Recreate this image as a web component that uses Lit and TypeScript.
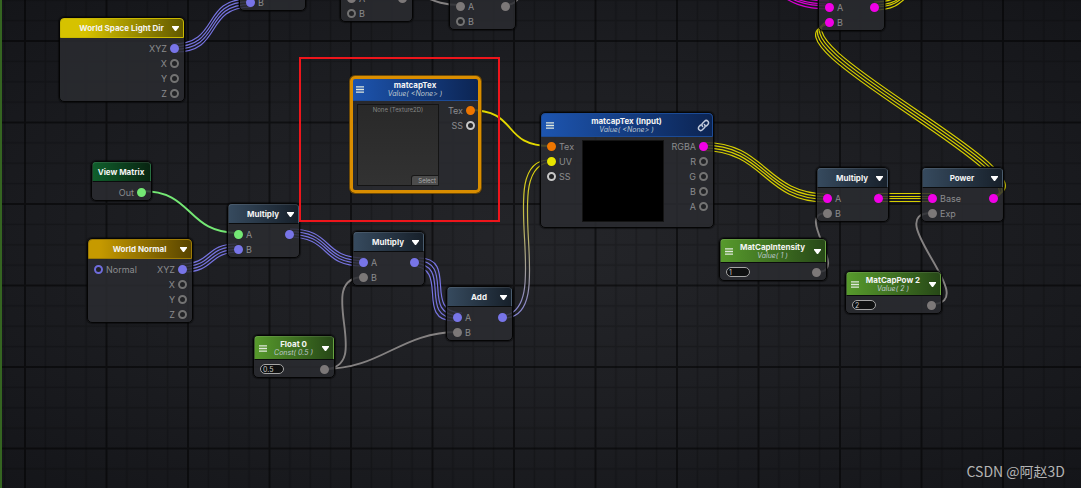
import { LitElement, html, css, svg, nothing } from "lit";
import { customElement, property } from "lit/decorators.js";

interface Port { label?: string; color?: string; filled?: boolean; }
interface GraphNode {
  x: number; y: number; width: number; title: string; tone: string;
  sub?: string; menu?: boolean; arrow?: boolean; link?: boolean; selected?: boolean;
  value?: string; preview?: "empty" | "black"; ins?: Port[]; outs?: Port[];
}
interface Wire { d: string; color: string; strands: number[][]; }

const VIOLET = "#7875e8", GREY = "#7c7878", PINK = "#f000e6", YELLOW = "#e8e400", ORANGE = "#ee7600", GREEN = "#74e874";
const on = (color: string, label = ""): Port => ({ label, color, filled: true });
const off = (label: string, color = "#737373"): Port => ({ label, color, filled: false });
const xyz = [on(VIOLET, "XYZ"), off("X"), off("Y"), off("Z")];

const NODES: GraphNode[] = [
  { x: 239, y: -44, width: 67, title: "", tone: "math", ins: [off(""), on(VIOLET, "B")], outs: [] },
  { x: 340, y: -33, width: 73, title: "", tone: "math", ins: [on(GREY, "A"), off("B")], outs: [on(GREY)] },
  { x: 449, y: -25, width: 67, title: "", tone: "math", ins: [on(GREY, "A"), off("B")], outs: [on(GREY)] },
  { x: 818, y: -24, width: 67, title: "", tone: "math", ins: [on(PINK, "A"), on(PINK, "B")], outs: [on(PINK)] },
  { x: 59, y: 17, width: 126, title: "World Space Light Dir", tone: "light", arrow: true, outs: xyz },
  { x: 91, y: 161, width: 61, title: "View Matrix", tone: "matrix", outs: [on(GREEN, "Out")] },
  { x: 87, y: 238, width: 106, title: "World Normal", tone: "normal", arrow: true, ins: [off("Normal", "#6f6cdb")], outs: xyz },
  { x: 227, y: 203, width: 73, title: "Multiply", tone: "math", arrow: true, ins: [on(GREEN, "A"), on(VIOLET, "B")], outs: [on(VIOLET)] },
  { x: 352, y: 231, width: 73, title: "Multiply", tone: "math", arrow: true, ins: [on(VIOLET, "A"), on(GREY, "B")], outs: [on(VIOLET)] },
  { x: 446, y: 286, width: 67, title: "Add", tone: "math", arrow: true, ins: [on(VIOLET, "A"), on(GREY, "B")], outs: [on(VIOLET)] },
  { x: 253, y: 335, width: 82, title: "Float 0", sub: "Const( 0.5 )", tone: "value", menu: true, arrow: true, value: "0.5", outs: [on(GREY)] },
  { x: 350, y: 76, width: 131, title: "matcapTex", sub: "Value( <None> )", tone: "texture", menu: true, selected: true, preview: "empty", outs: [on(ORANGE, "Tex"), off("SS", "#c8c8c8")] },
  { x: 540, y: 112, width: 174, title: "matcapTex (Input)", sub: "Value( <None> )", tone: "texture", menu: true, link: true, preview: "black",
    ins: [on(ORANGE, "Tex"), on(YELLOW, "UV"), off("SS", "#c8c8c8")], outs: [on(PINK, "RGBA"), off("R"), off("G"), off("B"), off("A")] },
  { x: 816, y: 167, width: 73, title: "Multiply", tone: "math", arrow: true, ins: [on(PINK, "A"), on(GREY, "B")], outs: [on(PINK)] },
  { x: 921, y: 167, width: 83, title: "Power", tone: "math", arrow: true, ins: [on(PINK, "Base"), on(GREY, "Exp")], outs: [on(PINK)] },
  { x: 719, y: 238, width: 108, title: "MatCapIntensity", sub: "Value( 1 )", tone: "value", menu: true, arrow: true, value: "1", outs: [on(GREY)] },
  { x: 845, y: 271, width: 97, title: "MatCapPow 2", sub: "Value( 2 )", tone: "value", menu: true, arrow: true, value: "2", outs: [on(GREY)] },
];

// Each strand is the base curve shifted by [dx, dy].
const one = [[0, 0]];
const two = [[-2, -1], [2, 1]];
const rising = [[-1.5, -4], [-0.5, -1.3], [0.5, 1.3], [1.5, 4]];
const falling = [[1, -4], [0.3, -1.3], [-0.3, 1.3], [-1, 4]];
const steep = [[4, -4], [1.3, -1.3], [-1.3, 1.3], [-4, 4]];
const flat = [[0, -4], [0, -1], [0, 1], [0, 4]];
const diagonal = [[3, -3], [1, -1], [-1, 1], [-3, 3]];

const WIRES: Wire[] = [
  { d: "M174 48 C222 48 202 3 250 3", color: "#7673e0", strands: rising },
  { d: "M142 191 C194 191 186 233 238 233", color: "#74e874", strands: one },
  { d: "M182 268 C214 268 206 248 238 248", color: "#7673e0", strands: rising },
  { d: "M289 233 C333 233 320 262 364 262", color: "#7673e0", strands: falling },
  { d: "M415 262 C455 262 418 317 458 317", color: "#7673e0", strands: steep },
  { d: "M324 369 C376 369 312 277 364 277", color: "#858282", strands: one },
  { d: "M324 369 C382 369 400 332 458 332", color: "#858282", strands: one },
  { d: "M469 110 C520 110 500 146 551 146", color: "#e2d800", strands: one },
  { d: "M502 317 C560 317 493 161 551 161", color: "url(#uv)", strands: two },
  { d: "M703 146.5 C766 146.5 764 198 827 198", color: "#d6ce00", strands: falling },
  { d: "M878 197.5 L932 197.5", color: "#d6ce00", strands: flat },
  { d: "M817 272 C851 272 793 213 827 213", color: "#858282", strands: one },
  { d: "M931 304 C985 304 878 213 932 213", color: "#858282", strands: one },
  { d: "M993 198 C1058 178 760 42 829 22", color: "#d6ce00", strands: diagonal },
  { d: "M874 6 C896 6 900 -1 912 -12", color: "#d6ce00", strands: flat },
  { d: "M829 5 C798 5 788 -4 772 -14", color: "#d800d2", strands: flat },
  { d: "M402 -8 C425 -8 430 5 460 5", color: "#858282", strands: one },
  { d: "M505 5 C515 5 517 0 522 -6", color: "#858282", strands: one },
];

@customElement("graph-node")
export class GraphNodeElement extends LitElement {
  @property({ attribute: false }) node!: GraphNode;

  static styles = css`
    :host { display: block; }
    .node {
      position: relative; box-sizing: border-box; border: 1px solid #050505; border-radius: 5px;
      box-shadow: 0 0 1px 1px rgba(0, 0, 0, 0.45);
      background: rgba(43, 44, 49, 0.84);
    }
    .selected::after {
      content: ""; position: absolute; inset: -1px; border: 3px solid #d98d00; border-radius: 5px;
      box-shadow: 0 0 0 1px #6d4a08; pointer-events: none;
    }
    .head {
      box-sizing: border-box; height: 20px; display: grid; align-items: center;
      grid-template-columns: 16px 1fr 16px; border-radius: 4px 4px 0 0;
      border: 1px solid rgba(255, 255, 255, 0.1); border-bottom-color: #0b0c0d;
    }
    .plain { grid-template-columns: 0 1fr 0; }
    .tall { height: 24px; }
    .math { background: linear-gradient(90deg, #364a5e, #17202a); }
    .light { background: linear-gradient(90deg, #d6c200 20%, #625900); border-color: #c9b800; }
    .normal { background: linear-gradient(90deg, #c69a00 10%, #584400); border-color: #9d7b05; }
    .matrix { background: linear-gradient(90deg, #105f2c, #082411); }
    .value { background: linear-gradient(90deg, #579a2c, #274817); }
    .texture { background: linear-gradient(90deg, #1d55b0, #0c2452); border-color: #1c4b96; }
    .names { text-align: center; white-space: nowrap; display: flex; flex-direction: column; align-items: center; min-width: 0; padding-right: 1px; }
    h2 { margin: 0; font-size: 8px; line-height: 9px; font-weight: 700; color: #f4f4f4; }
    .sub { font-size: 7px; line-height: 8px; font-style: italic; color: #bfc8cf; }
    button { font: inherit; border: 0; padding: 0; margin: 0; background: none; color: inherit; }
    .icon { display: grid; place-items: center; height: 16px; }
    .arrow { grid-column: 3; }
    .link { justify-self: end; margin-right: 2px; }
    svg { display: block; }
    .body { display: flex; justify-content: space-between; padding: 3px 5px 0 6px; }
    .short { padding-top: 2px; }
    .ports { display: flex; flex-direction: column; margin: 0; padding: 0; list-style: none; }
    .row { display: flex; align-items: center; gap: 3px; height: 15px; font-size: 9px; line-height: 15px; color: #8b8c8e; }
    .outs .row { flex-direction: row-reverse; }
    .dot { box-sizing: border-box; width: 9px; height: 9px; border-radius: 50%; border: 2px solid currentColor; background: #222326; }
    .filled { background: currentColor; }
    .field {
      box-sizing: border-box; width: 24px; height: 10px; margin: 2px 0 0; padding: 0 2px;
      border: 1px solid #a5a5a5; border-radius: 5px; background: #0f1011; color: #c8c8c8;
      font: 7px/8px Inter, sans-serif; outline: 0;
    }
    .preview { box-sizing: border-box; width: 82px; height: 82px; margin: 1px 0 5px; border: 1px solid #141414; background: #000; }
    .empty {
      background: linear-gradient(#292929, #323232); display: flex; flex-direction: column; justify-content: space-between;
      text-align: center; font-size: 6px; line-height: 9px; color: #858585; margin-bottom: 6px;
    }
    .select { align-self: flex-end; width: 26px; height: 9px; line-height: 9px; text-align: right; padding-right: 2px; background: #4c4c4c; color: #aaa; border-radius: 2px 0 0 0; box-shadow: 0 0 0 1px #181818; }
  `;

  private ports(list: Port[] | undefined, cls: string) {
    return html`<ul class="ports ${cls}">${(list ?? []).map(p => html`
      <li class="row"><span class="dot ${p.filled ? "filled" : ""}" style="color:${p.color}"></span>${p.label}</li>`)}</ul>`;
  }

  render() {
    const n = this.node;
    return html`<section class="node ${n.selected ? "selected" : ""}">
      <header class="head ${n.tone} ${n.sub ? "tall" : ""} ${n.arrow || n.menu ? "" : "plain"}">
        ${n.menu ? html`<button class="icon" aria-label="Menu"><svg width="8" height="7" viewBox="0 0 8 7"><path d="M0 .8h8M0 3.5h8M0 6.2h8" stroke="#dfe8dc" stroke-width="1.3" /></svg></button>` : html`<span></span>`}
        <div class="names">${n.title ? html`<h2>${n.title}</h2>` : nothing}${n.sub ? html`<span class="sub">${n.sub}</span>` : nothing}</div>
        ${n.arrow ? html`<button class="icon arrow" aria-label="Collapse"><svg width="7" height="5" viewBox="0 0 7 5"><path d="M0 0h7v1L4 5H3L0 1z" fill="#fff" /></svg></button>` : nothing}
        ${n.link ? html`<button class="icon link" aria-label="Linked"><svg width="13" height="13" viewBox="0 0 13 13" fill="none" stroke="#c3cbdc" stroke-width="1.5" stroke-linecap="round"><path d="M5.6 7.4a2.3 2.3 0 0 1 0-3.2l2-2a2.3 2.3 0 0 1 3.3 3.3L9.5 6.9M7.4 5.6a2.3 2.3 0 0 1 0 3.2l-2 2a2.3 2.3 0 0 1-3.3-3.3l1.4-1.4" /></svg></button>` : nothing}
      </header>
      <div class="body ${n.sub ? "short" : ""}">
        ${n.value ? html`<input class="field" aria-label="${n.title}" .value=${n.value} />` : n.preview === "empty" ? nothing : this.ports(n.ins, "ins")}
        ${n.preview === "black" ? html`<div class="preview"></div>` : nothing}
        ${n.preview === "empty" ? html`<div class="preview empty"><span>None (Texture2D)</span><button class="select">Select</button></div>` : nothing}
        ${this.ports(n.outs, "outs")}
      </div>
    </section>`;
  }
}

@customElement("app-root")
export class AppRoot extends LitElement {
  static styles = css`
    :host { display: block; font-family: Inter, Roboto, sans-serif; }
    .canvas {
      position: relative; height: 100vh; overflow: hidden; box-sizing: border-box;
      background: radial-gradient(ellipse at center, #242529, #1d1e22 50%, #141519 100%);
    }
    .wires { position: absolute; inset: 0; width: 100%; height: 100%; }
    .item { position: absolute; }
    .frame { position: absolute; box-sizing: border-box; border: 2px solid #ee151b; }
    .edge { position: absolute; inset: 0 auto 0 0; width: 2px; background: #356521; }
    .credit {
      position: absolute; right: 16px; bottom: 8px; margin: 0; color: #b4b4b4;
      font: 14px/18px "Noto Sans CJK SC", sans-serif;
    }
  `;

  render() {
    return html`<main class="canvas">
      <svg class="wires" fill="none" aria-hidden="true">
        <defs>
          <pattern id="grid" x="25" y="41" width="81.5" height="81.5" patternUnits="userSpaceOnUse">
            <path d="M20.4 0v81.5M40.8 0v81.5M61.1 0v81.5M0 20.4h81.5M0 40.8h81.5M0 61.1h81.5" stroke="#000" stroke-opacity=".2" stroke-width="1.5" />
            <path d="M0 0v81.5M81.5 0v81.5M0 0h81.5M0 81.5h81.5" stroke="#000" stroke-opacity=".5" stroke-width="2" />
          </pattern>
          <linearGradient id="uv" gradientUnits="userSpaceOnUse" x1="0" y1="317" x2="0" y2="161">
            <stop offset="0" stop-color="#8583d8" /><stop offset="1" stop-color="#e2d800" />
          </linearGradient>
        </defs>
        <rect width="100%" height="100%" fill="url(#grid)" />
        ${WIRES.map(w => w.strands.map(([dx, dy]) => svg`<path d=${w.d} stroke=${w.color} stroke-width=${w.strands.length > 1 ? 1.2 : 1.9} transform="translate(${dx} ${dy})" />`))}
      </svg>
      <div class="edge"></div>
      ${NODES.map(n => html`<graph-node class="item" style="left:${n.x}px;top:${n.y}px;width:${n.width}px" .node=${n}></graph-node>`)}
      <div class="frame" style="left:299px;top:57px;width:201px;height:165px"></div>
      <p class="credit">CSDN @阿赵3D</p>
    </main>`;
  }
}
